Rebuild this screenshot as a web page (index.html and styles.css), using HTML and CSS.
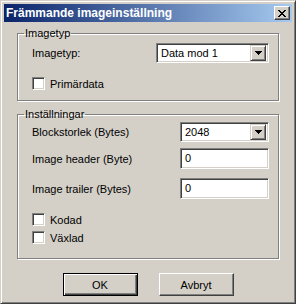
FILE: index.html
```html
<!DOCTYPE html>
<html lang="sv">
<head>
<meta charset="UTF-8">
<title>Främmande imageinställning</title>
<link rel="stylesheet" href="styles.css">
</head>
<body>

<div class="window">
<div class="titlebar">
<span class="title">Främmande imageinställning</span>
<span class="close-btn">
<svg width="8" height="7" viewBox="0 0 8 7" shape-rendering="crispEdges">
<path d="M0 0h2v1h-2zM6 0h2v1h-2zM1 1h2v1h-2zM5 1h2v1h-2zM2 2h4v1h-4zM3 3h2v1h-2zM2 4h4v1h-4zM1 5h2v1h-2zM5 5h2v1h-2zM0 6h2v1h-2zM6 6h2v1h-2z" fill="#000"/>
</svg>
</span>
</div>

<div class="dialog-body">

<fieldset class="group group-type">
<legend>Imagetyp</legend>
<div class="row">
<span class="row-label">Imagetyp:</span>
<div class="combo combo-type">
<span class="combo-value">Data mod 1</span>
<span class="combo-btn"><svg width="7" height="4" viewBox="0 0 7 4" shape-rendering="crispEdges"><path d="M0 0h7v1h-7zM1 1h5v1h-5zM2 2h3v1h-3zM3 3h1v1h-1z" fill="#000"/></svg></span>
</div>
</div>
<label class="check check-first"><span class="check-box"></span>Primärdata</label>
</fieldset>

<fieldset class="group group-settings">
<legend>Inställningar</legend>
<div class="row">
<span class="row-label">Blockstorlek (Bytes)</span>
<div class="combo combo-size">
<span class="combo-value">2048</span>
<span class="combo-btn"><svg width="7" height="4" viewBox="0 0 7 4" shape-rendering="crispEdges"><path d="M0 0h7v1h-7zM1 1h5v1h-5zM2 2h3v1h-3zM3 3h1v1h-1z" fill="#000"/></svg></span>
</div>
</div>
<div class="row row-header">
<span class="row-label">Image header (Byte)</span>
<div class="textbox">0</div>
</div>
<div class="row row-trailer">
<span class="row-label">Image trailer (Bytes)</span>
<div class="textbox">0</div>
</div>
<label class="check check-first"><span class="check-box"></span>Kodad</label>
<label class="check check-next"><span class="check-box"></span>Växlad</label>
</fieldset>

<div class="buttons">
<button class="btn btn-default">OK</button>
<button class="btn">Avbryt</button>
</div>

</div>
</div>

</body>
</html>
```

FILE: styles.css
```css
body{
margin:0;
background:#d4d0c8;
font-family:"Liberation Sans", Arial, sans-serif;
font-size:11px;
color:#000;
}

.window{
width:296px;
height:304px;
box-sizing:border-box;
padding:3px;
background:#d4d0c8;
border-top:1px solid #d4d0c8;
border-left:1px solid #d4d0c8;
border-right:1px solid #404040;
border-bottom:1px solid #404040;
box-shadow:inset 1px 1px 0 #fff, inset -1px -1px 0 #808080;
}

.titlebar{
height:18px;
display:flex;
align-items:center;
justify-content:space-between;
padding:0 2px;
background:linear-gradient(to right,#0a246a,#a6caf0);
}

.title{
color:#fff;
font-weight:bold;
font-size:12px;
}

.close-btn{
width:16px;
height:14px;
box-sizing:border-box;
display:flex;
align-items:center;
justify-content:center;
background:#d4d0c8;
border-top:1px solid #fff;
border-left:1px solid #fff;
border-right:1px solid #404040;
border-bottom:1px solid #404040;
box-shadow:inset -1px -1px 0 #808080;
}

.dialog-body{
padding:5px 13px 0 13px;
}

.group{
margin:0;
padding:3px 9px 10px 14px;
min-width:0;
border:1px solid #808080;
box-shadow:1px 1px 0 #fff, inset 1px 1px 0 #fff;
width:262px;
box-sizing:border-box;
}

.group legend{
padding:0 1px;
margin-left:-8px;
line-height:13px;
}

.group-settings{
margin-top:7px;
padding-top:1px;
padding-bottom:14px;
}

.row{
display:flex;
align-items:center;
justify-content:space-between;
}

.row-header{
margin-top:6px;
}

.row-trailer{
margin-top:9px;
}

.combo{
height:20px;
box-sizing:border-box;
display:flex;
align-items:center;
justify-content:space-between;
background:#fff;
border-top:1px solid #808080;
border-left:1px solid #808080;
border-right:1px solid #fff;
border-bottom:1px solid #fff;
box-shadow:inset 1px 1px 0 #404040, inset -1px -1px 0 #d4d0c8;
padding:2px 2px 2px 4px;
}

.combo-type{
width:113px;
}

.combo-size{
width:89px;
}

.combo-btn{
width:16px;
height:16px;
box-sizing:border-box;
display:flex;
align-items:center;
justify-content:center;
background:#d4d0c8;
border-top:1px solid #d4d0c8;
border-left:1px solid #d4d0c8;
border-right:1px solid #404040;
border-bottom:1px solid #404040;
box-shadow:inset 1px 1px 0 #fff, inset -1px -1px 0 #808080;
}

.textbox{
width:89px;
height:21px;
box-sizing:border-box;
padding:3px 4px;
line-height:13px;
background:#fff;
border-top:1px solid #808080;
border-left:1px solid #808080;
border-right:1px solid #fff;
border-bottom:1px solid #fff;
box-shadow:inset 1px 1px 0 #404040, inset -1px -1px 0 #d4d0c8;
}

.check{
display:flex;
align-items:center;
gap:5px;
height:13px;
}

.check-first{
margin-top:14px;
}

.check-next{
margin-top:5px;
}

.check-box{
width:13px;
height:13px;
box-sizing:border-box;
background:#fff;
border-top:1px solid #808080;
border-left:1px solid #808080;
border-right:1px solid #fff;
border-bottom:1px solid #fff;
box-shadow:inset 1px 1px 0 #404040, inset -1px -1px 0 #d4d0c8;
}

.buttons{
display:flex;
justify-content:center;
gap:21px;
margin-top:14px;
}

.btn{
width:75px;
height:23px;
padding:0;
font-family:"Liberation Sans", Arial, sans-serif;
font-size:11px;
color:#000;
background:#d4d0c8;
border-top:1px solid #fff;
border-left:1px solid #fff;
border-right:1px solid #404040;
border-bottom:1px solid #404040;
box-shadow:inset -1px -1px 0 #808080;
}

.btn-default{
border:1px solid #000;
box-shadow:inset 1px 1px 0 #fff, inset -1px -1px 0 #404040, inset -2px -2px 0 #808080;
}
```
